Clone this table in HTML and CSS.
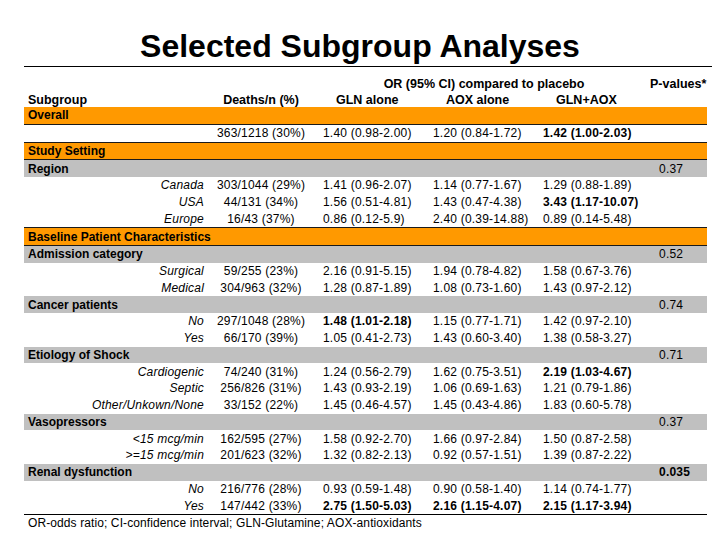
FILE: index.html
```html
<!DOCTYPE html>
<html>
<head>
<meta charset="utf-8">
<link rel="stylesheet" href="styles.css">
</head>
<body>
<h1 class="title">Selected Subgroup Analyses</h1>
<div class="rule"></div>
<table class="tbl">
  <colgroup>
    <col class="c-label"><col class="c-deaths"><col class="c-or"><col class="c-or"><col class="c-or2"><col class="c-p">
  </colgroup>
  <thead>
    <tr class="hrow">
      <th></th><th></th>
      <th colspan="3" class="h-or">OR (95% CI) compared to placebo</th>
      <th class="h-p">P-values*</th>
    </tr>
    <tr class="hrow">
      <th class="h-sub">Subgroup</th>
      <th class="h-deaths">Deaths/n (%)</th>
      <th class="h-col">GLN alone</th>
      <th class="h-col">AOX alone</th>
      <th class="h-col">GLN+AOX</th>
      <th></th>
    </tr>
  </thead>
  <tbody>
    <tr class="sec sec-first"><td colspan="6" class="glabel">Overall</td></tr>
    <tr><td></td><td class="deaths">363/1218 (30%)</td><td class="orv">1.40 (0.98-2.00)</td><td class="orv">1.20 (0.84-1.72)</td><td class="orv b">1.42 (1.00-2.03)</td><td></td></tr>

    <tr class="sec"><td colspan="6" class="glabel">Study Setting</td></tr>
    <tr class="grp"><td colspan="5" class="glabel">Region</td><td class="pv">0.37</td></tr>
    <tr><td class="sub">Canada</td><td class="deaths">303/1044 (29%)</td><td class="orv">1.41 (0.96-2.07)</td><td class="orv">1.14 (0.77-1.67)</td><td class="orv">1.29 (0.88-1.89)</td><td></td></tr>
    <tr><td class="sub">USA</td><td class="deaths">44/131 (34%)</td><td class="orv">1.56 (0.51-4.81)</td><td class="orv">1.43 (0.47-4.38)</td><td class="orv b">3.43 (1.17-10.07)</td><td></td></tr>
    <tr><td class="sub">Europe</td><td class="deaths">16/43 (37%)</td><td class="orv">0.86 (0.12-5.9)</td><td class="orv">2.40 (0.39-14.88)</td><td class="orv">0.89 (0.14-5.48)</td><td></td></tr>

    <tr class="sec"><td colspan="6" class="glabel">Baseline Patient Characteristics</td></tr>
    <tr class="grp"><td colspan="5" class="glabel">Admission category</td><td class="pv">0.52</td></tr>
    <tr><td class="sub">Surgical</td><td class="deaths">59/255 (23%)</td><td class="orv">2.16 (0.91-5.15)</td><td class="orv">1.94 (0.78-4.82)</td><td class="orv">1.58 (0.67-3.76)</td><td></td></tr>
    <tr><td class="sub">Medical</td><td class="deaths">304/963 (32%)</td><td class="orv">1.28 (0.87-1.89)</td><td class="orv">1.08 (0.73-1.60)</td><td class="orv">1.43 (0.97-2.12)</td><td></td></tr>

    <tr class="grp"><td colspan="5" class="glabel">Cancer patients</td><td class="pv">0.74</td></tr>
    <tr><td class="sub">No</td><td class="deaths">297/1048 (28%)</td><td class="orv b">1.48 (1.01-2.18)</td><td class="orv">1.15 (0.77-1.71)</td><td class="orv">1.42 (0.97-2.10)</td><td></td></tr>
    <tr><td class="sub">Yes</td><td class="deaths">66/170 (39%)</td><td class="orv">1.05 (0.41-2.73)</td><td class="orv">1.43 (0.60-3.40)</td><td class="orv">1.38 (0.58-3.27)</td><td></td></tr>

    <tr class="grp"><td colspan="5" class="glabel">Etiology of Shock</td><td class="pv">0.71</td></tr>
    <tr><td class="sub">Cardiogenic</td><td class="deaths">74/240 (31%)</td><td class="orv">1.24 (0.56-2.79)</td><td class="orv">1.62 (0.75-3.51)</td><td class="orv b">2.19 (1.03-4.67)</td><td></td></tr>
    <tr><td class="sub">Septic</td><td class="deaths">256/826 (31%)</td><td class="orv">1.43 (0.93-2.19)</td><td class="orv">1.06 (0.69-1.63)</td><td class="orv">1.21 (0.79-1.86)</td><td></td></tr>
    <tr><td class="sub">Other/Unkown/None</td><td class="deaths">33/152 (22%)</td><td class="orv">1.45 (0.46-4.57)</td><td class="orv">1.45 (0.43-4.86)</td><td class="orv">1.83 (0.60-5.78)</td><td></td></tr>

    <tr class="grp"><td colspan="5" class="glabel">Vasopressors</td><td class="pv">0.37</td></tr>
    <tr><td class="sub">&lt;15 mcg/min</td><td class="deaths">162/595 (27%)</td><td class="orv">1.58 (0.92-2.70)</td><td class="orv">1.66 (0.97-2.84)</td><td class="orv">1.50 (0.87-2.58)</td><td></td></tr>
    <tr><td class="sub">&gt;=15 mcg/min</td><td class="deaths">201/623 (32%)</td><td class="orv">1.32 (0.82-2.13)</td><td class="orv">0.92 (0.57-1.51)</td><td class="orv">1.39 (0.87-2.22)</td><td></td></tr>

    <tr class="grp"><td colspan="5" class="glabel">Renal dysfunction</td><td class="pv b">0.035</td></tr>
    <tr><td class="sub">No</td><td class="deaths">216/776 (28%)</td><td class="orv">0.93 (0.59-1.48)</td><td class="orv">0.90 (0.58-1.40)</td><td class="orv">1.14 (0.74-1.77)</td><td></td></tr>
    <tr class="last"><td class="sub">Yes</td><td class="deaths">147/442 (33%)</td><td class="orv b">2.75 (1.50-5.03)</td><td class="orv b">2.16 (1.15-4.07)</td><td class="orv b">2.15 (1.17-3.94)</td><td></td></tr>
  </tbody>
</table>
<p class="note">OR-odds ratio; CI-confidence interval; GLN-Glutamine; AOX-antioxidants</p>
</body>
</html>
```
FILE: styles.css
```css
html, body {
  margin: 0;
  padding: 0;
  background: #ffffff;
}
body {
  width: 720px;
  height: 540px;
  overflow: hidden;
  font-family: "Liberation Sans", Arial, sans-serif;
  color: #000;
}
.title {
  margin: 28px 0 0 0;
  height: 36px;
  line-height: 36px;
  font-size: 32px;
  font-weight: bold;
  text-align: center;
}
.rule {
  margin: 2px 8px 0 24px;
  border-top: 1px solid #000;
}
.tbl {
  margin: 8px 0 0 24px;
  width: 683px;
  table-layout: fixed;
  border-collapse: collapse;
  font-size: 12px;
}
.c-label { width: 180px; }
.c-deaths { width: 114px; }
.c-or { width: 110px; }
.c-or2 { width: 112px; }
.c-p { width: 57px; }
.tbl th, .tbl td {
  padding: 0;
  height: 16.75px;
  line-height: 14px;
  white-space: nowrap;
  overflow: visible;
  vertical-align: middle;
}
.hrow th {
  height: 16px;
  font-size: 12.5px;
  font-weight: bold;
  text-align: left;
  vertical-align: bottom;
}
.h-or { text-align: center !important; }
.h-p { padding-left: 0; }
.h-sub { padding-left: 4px !important; }
.h-deaths { text-align: center !important; }
.h-col { padding-left: 18px !important; }
.sec td {
  background: #ff9900;
  border-top: 1px solid #1a1a1a;
  border-bottom: 1px solid #1a1a1a;
}
.sec-first td { border-top: none; }
.grp td {
  background: #c0c0c0;
}
.glabel {
  font-weight: bold;
  padding-left: 4px !important;
  text-align: left;
}
.sub {
  font-style: italic;
  text-align: right;
  letter-spacing: 0.2px;
}
.deaths {
  text-align: center;
  letter-spacing: 0.2px;
}
.orv {
  padding-left: 5px !important;
  letter-spacing: 0.2px;
}
.pv {
  padding-left: 9px !important;
  letter-spacing: 0.2px;
}
.b { font-weight: bold; }
.last td { border-bottom: 1px solid #000; }
.note {
  margin: 0 0 0 28px;
  font-size: 12px;
  line-height: 17px;
  letter-spacing: 0.1px;
}
```
